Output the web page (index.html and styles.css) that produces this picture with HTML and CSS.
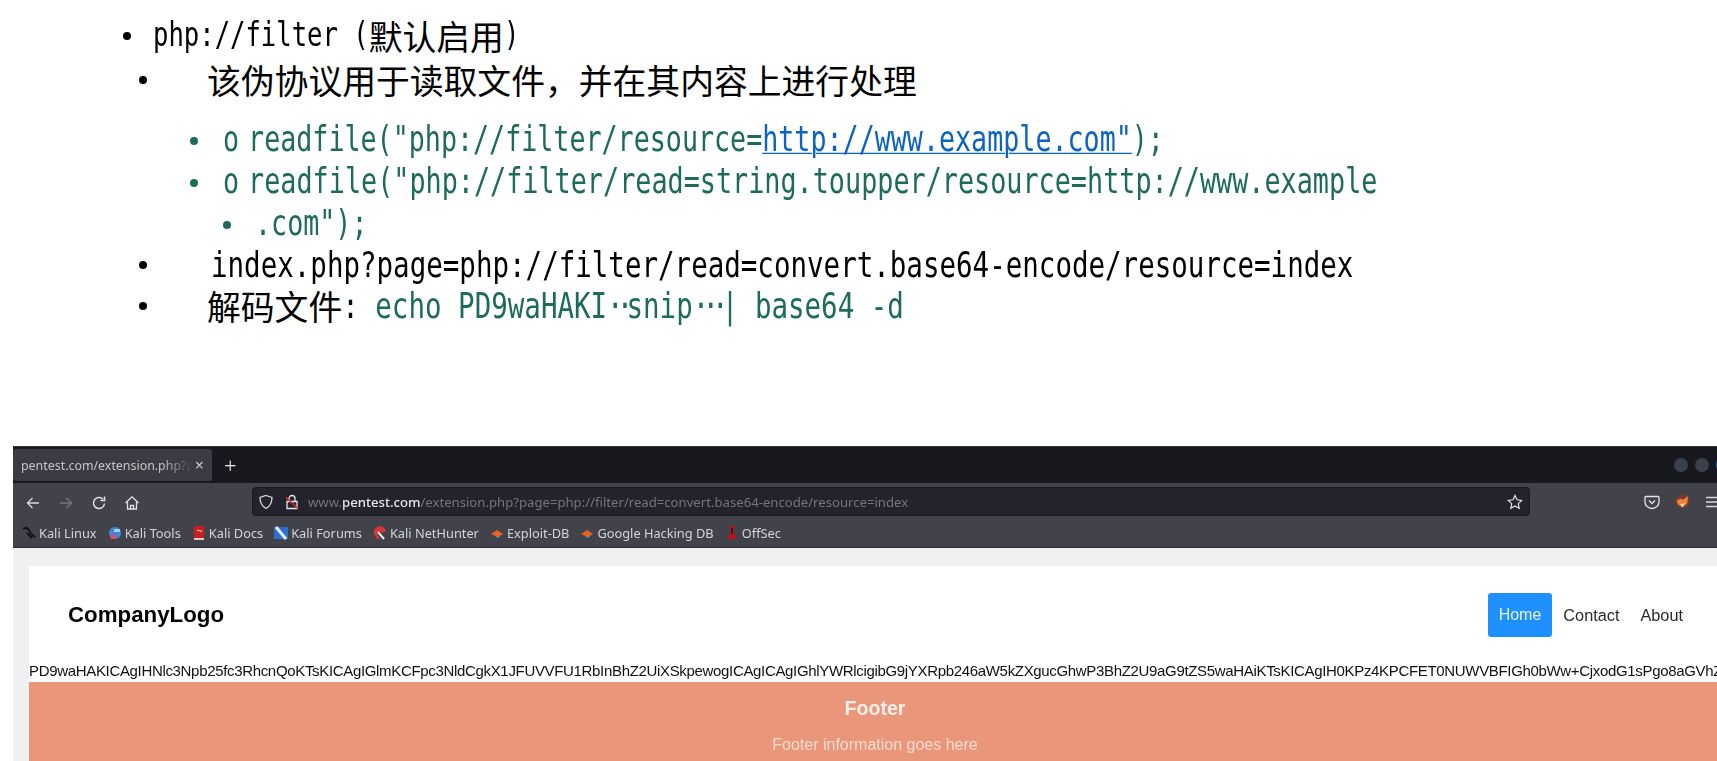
FILE: index.html
```html
<!DOCTYPE html>
<html lang="zh">
<head>
<meta charset="utf-8">
<title>php://filter</title>
<link rel="stylesheet" href="styles.css">
</head>
<body>
<section class="notes">
  <div class="row top"><span class="dot"></span><span class="lat w-a">php://filter (</span><span class="cjk">默认启用</span><span class="lat w-a">)</span></div>
  <div class="row l2 after-top"><span class="dot"></span><span class="cjk">该伪协议用于读取文件，并在其内容上进行处理</span></div>
  <div class="row l3 green after-head"><span class="dot"></span><span class="lat w-g o">o</span><span class="lat w-g">readfile("php://filter/resource=<a href="#" class="link">http://www.example.com"</a>);</span></div>
  <div class="row l3 green"><span class="dot"></span><span class="lat w-g o">o</span><span class="lat w-h">readfile("php://filter/read=string.toupper/resource=http://www.example</span></div>
  <div class="row l4 green"><span class="dot"></span><span class="lat w-g">.com");</span></div>
  <div class="row l2 up-2"><span class="dot"></span><span class="lat w-i nudge">index.php?page=php://filter/read=convert.base64-encode/resource=index</span></div>
  <div class="row l2 up-1"><span class="dot"></span><span class="cjk">解码文件</span><span class="lat w-i">: </span><span class="lat w-i greentext">echo PD9waHAKI<span class="tight-a">··</span>snip<span class="tight-b">···</span>| base64 -d</span></div>
</section>

<section class="shot">
  <div class="tabbar">
    <div class="tab"><span class="tab-title">pentest.com/extension.php?p</span><span class="tab-x">×</span></div>
    <span class="tab-plus">+</span>
    <div class="win-dots"><i></i><i></i><i class="blue"></i></div>
  </div>
  <div class="toolbar">
    <div class="navrow">
      <div class="navbtns">
        <svg viewBox="0 0 16 16" class="ic"><path d="M14 8H2.500M7.500 3 2.500 8l5 5" fill="none" stroke="#d6d6da" stroke-width="1.400"/></svg>
        <svg viewBox="0 0 16 16" class="ic"><path d="M2 8h11.500M8.500 3l5 5-5 5" fill="none" stroke="#74757c" stroke-width="1.400"/></svg>
        <svg viewBox="0 0 16 16" class="ic"><path d="M13.500 8.500A5.500 5.500 0 1 1 11.800 4M13.500 1.500V5.500H9.500" fill="none" stroke="#e2e2e6" stroke-width="1.500"/></svg>
        <svg viewBox="0 0 16 16" class="ic"><path d="M1.500 8 8 1.800 14.500 8M3.500 7v7h9V7M6.500 14v-3.500h3V14" fill="none" stroke="#e2e2e6" stroke-width="1.300"/></svg>
      </div>
      <div class="urlbar">
        <svg viewBox="0 0 16 16" class="ic shield"><path d="M8 1.500 14 3.500c0 5-1.500 8.500-6 11-4.500-2.500-6-6-6-11z" fill="none" stroke="#d8d8dc" stroke-width="1.300"/></svg>
        <svg viewBox="0 0 16 16" class="ic lock"><path d="M3 7.500h10v7H3zM5 7.500V4.500a3 3 0 0 1 6 0v3" fill="none" stroke="#e4e4e8" stroke-width="1.300"/><path d="M2 3.500 14 14.500" stroke="#e0283c" stroke-width="1.600"/></svg>
        <span class="url">www.<b>pentest.com</b>/extension.php?page=php://filter/read=convert.base64-encode/resource=index</span>
        <svg viewBox="0 0 16 16" class="ic star"><path d="M8 1.500l2 4.300 4.700.6-3.400 3.200.9 4.700L8 12l-4.200 2.300.9-4.700L1.300 6.400 6 5.800z" fill="none" stroke="#e2e2e6" stroke-width="1.200"/></svg>
      </div>
      <div class="tools">
        <svg viewBox="0 0 16 16" class="ic"><path d="M2 2.500h12a1 1 0 0 1 1 1V8a7 6.500 0 0 1-14 0V3.500a1 1 0 0 1 1-1z" fill="none" stroke="#e2e2e6" stroke-width="1.300"/><path d="M5 6.500l3 3 3-3" fill="none" stroke="#e2e2e6" stroke-width="1.400"/></svg>
        <svg viewBox="0 0 16 16" class="ic fox"><circle cx="8" cy="8" r="7.500" fill="#7a3a30"/><path d="M2 7l4-2 2 1 2-1 4-3-1 8-5 4-5-3z" fill="#ee8433"/><path d="M5 10l3 1 3-2-3 5z" fill="#f6e2d0"/></svg>
        <svg viewBox="0 0 16 16" class="ic"><path d="M1 3.500h14M1 8h14M1 12.500h14" stroke="#d6d6da" stroke-width="1.400"/></svg>
      </div>
    </div>
    <div class="bookmarks">
      <span class="bm"><svg viewBox="0 0 14 14"><path d="M1 3c3-2 6 0 7 3s3 3 5 5M4 1l3 3M5 7l5 5" fill="none" stroke="#111" stroke-width="1.800"/></svg>Kali Linux</span>
      <span class="bm"><svg viewBox="0 0 14 14"><circle cx="7" cy="7" r="6" fill="#3f86d8"/><path d="M2 9h6v4H3z" fill="#d8506a"/><path d="M6 3h6v3H6z" fill="#a8cdf2"/></svg>Kali Tools</span>
      <span class="bm"><svg viewBox="0 0 14 14"><path d="M2 0h10v12H2z" fill="#c81e24"/><path d="M2 12h10v2H2z" fill="#e8c8c0"/><path d="M5 5c2-2 3 1 5 0" stroke="#fff" fill="none"/></svg>Kali Docs</span>
      <span class="bm"><svg viewBox="0 0 14 14"><path d="M0 1h14v12H0z" fill="#2b6fd0"/><path d="M2 1l10 12" stroke="#e8eef8" stroke-width="3"/></svg>Kali Forums</span>
      <span class="bm"><svg viewBox="0 0 14 14"><path d="M1 8a6 6 0 0 1 12-3l-4 2a2 2 0 0 0-4 2l2 4H4z" fill="#d8343c"/><path d="M5 6l6 7" stroke="#eee" stroke-width="2"/></svg>Kali NetHunter</span>
      <span class="bm"><svg viewBox="0 0 14 14"><path d="M1 8l6-4 6 4-5 3z" fill="#e8641e"/><path d="M5 10h5l-2 2z" fill="#7a8aa0"/></svg>Exploit-DB</span>
      <span class="bm"><svg viewBox="0 0 14 14"><path d="M1 8l6-4 6 4-5 3z" fill="#e8641e"/><path d="M5 10h5l-2 2z" fill="#7a8aa0"/></svg>Google Hacking DB</span>
      <span class="bm"><svg viewBox="0 0 14 14"><path d="M5 0h4v9h2v4H3V9h2z" fill="#b8141c"/><path d="M6 2h2v6H6z" fill="#2a2226"/></svg>OffSec</span>
    </div>
  </div>
  <div class="viewport">
    <div class="card">
      <header class="site-head">
        <div class="logo">CompanyLogo</div>
        <nav class="site-nav"><a class="active" href="#">Home</a><a href="#">Contact</a><a href="#">About</a></nav>
      </header>
      <div class="b64">PD9waHAKICAgIHNlc3Npb25fc3RhcnQoKTsKICAgIGlmKCFpc3NldCgkX1JFUVVFU1RbInBhZ2UiXSkpewogICAgICAgIGhlYWRlcigibG9jYXRpb246aW5kZXgucGhwP3BhZ2U9aG9tZS5waHAiKTsKICAgIH0KPz4KPCFET0NUWVBFIGh0bWw+CjxodG1sPgo8aGVhZ</div>
      <footer class="site-foot">
        <h3>Footer</h3>
        <p>Footer information goes here</p>
      </footer>
    </div>
  </div>
</section>
</body>
</html>
```
FILE: styles.css
```css
* { box-sizing: border-box; }
html, body { margin: 0; padding: 0; height: 761px; overflow: hidden; background: #fff; }
body { font-family: "Liberation Sans", sans-serif; color: #000; }

.notes { height: 446px; padding-top: 15px; }
.row { display: flex; align-items: center; height: 42px; white-space: pre; position: relative; }
.dot { width: 8px; height: 8px; border-radius: 50%; background: currentColor; flex: none; }
.top { padding-left: 123px; }
.top .dot { margin-right: 22px; }
.l2 { padding-left: 139px; }
.l2 .dot { margin-right: 60px; }
.l3 { padding-left: 190px; }
.l3 .dot { margin-right: 25px; }
.l4 { padding-left: 223px; }
.l4 .dot { margin-right: 24px; }
.after-top { margin-top: 2px; }
.after-head { margin-top: 19px; }
.up-2 { margin-top: -2px; }
.up-1 { margin-top: -1px; }
.green { color: #1d6b5b; }
.greentext { color: #1d6b5b; }
.cjk { font-family: "Noto Sans CJK SC", sans-serif; font-size: 33.8px; line-height: 42px; font-weight: 400; }
.lat { display: inline-block; font-family: "DejaVu Sans Mono", monospace; line-height: 42px; transform: scaleY(1.3); transform-origin: 50% 60%; }
.w-a { font-size: 25.6px; }
.w-g { font-size: 26.7px; }
.w-h { font-size: 26.8px; }
.w-i { font-size: 27.5px; }
.nudge { margin-left: 4px; }
.o { margin-right: 9px; }
.tight-a { letter-spacing: -.25em; }
.tight-b { letter-spacing: -.25em; }
.link { color: #0b63c4; text-decoration: underline; text-decoration-thickness: 1px; }

.shot { width: 1704px; height: 315px; margin-left: 13px; overflow: hidden; filter: blur(.45px); }
.tabbar { height: 37px; background: #18191e; display: flex; align-items: center; border-top: 1px solid #33343a; font-family: "Noto Sans", sans-serif; }
.tab { width: 199px; height: 32px; flex: none; background: #3b3c43; border-radius: 3px; display: flex; align-items: center; padding: 0 8px; color: #c6c6ca; font-size: 12.4px; justify-content: space-between; }
.tab-title { width: 172px; overflow: hidden; white-space: nowrap; -webkit-mask-image: linear-gradient(90deg, #000 82%, transparent); mask-image: linear-gradient(90deg, #000 82%, transparent); }
.tab-x { font-size: 16px; }
.tab-plus { color: #e8e8ea; font-size: 22px; margin-left: 12px; font-weight: 300; }
.win-dots { margin-left: auto; display: flex; gap: 7px; margin-right: -13px; flex: none; }
.win-dots i { width: 14px; height: 14px; border-radius: 50%; background: #3a3f4c; display: block; flex: none; }
.win-dots .blue { background: #2563c8; }
.toolbar { background: #42434a; height: 65px; border-bottom: 1px solid #2c2d30; }
.navrow { height: 33px; display: flex; align-items: flex-start; }
.ic { width: 16px; height: 16px; display: block; flex: none; }
.navbtns { width: 239px; flex: none; display: flex; gap: 17px; padding: 12px 0 0 12px; }
.urlbar { width: 1278px; flex: none; height: 29px; margin-top: 4px; background: #22232c; border: 1px solid #191a1f; border-radius: 4px; display: flex; align-items: center; padding: 0 6px 0 5px; }
.lock { margin-left: 10px; }
.url { margin-left: 8px; padding-top: 1px; font-family: "Noto Sans", sans-serif; font-size: 13.15px; color: #74757c; white-space: nowrap; flex: 1; }
.url b { color: #e6e6ea; font-weight: 500; }
.tools { display: flex; flex: none; gap: 15px; padding: 11px 0 0 114px; }
.fox { width: 15px; height: 15px; }
.bookmarks { height: 31px; display: flex; align-items: center; gap: 11px; padding: 3px 0 0 9px; font-family: "Noto Sans", sans-serif; font-size: 12.8px; color: #d4d4d8; white-space: nowrap; }
.bm { display: flex; align-items: center; gap: 3px; }
.bm svg { width: 14px; height: 14px; flex: none; }

.viewport { background: #f0f0f1; padding: 18px 0 0 16px; height: 213px; }
.card { width: 1692px; background: #fff; }
.site-head { height: 94px; padding: 27px 27px 0 39px; display: flex; justify-content: space-between; align-items: flex-start; }
.logo { font-size: 22.3px; font-weight: 700; line-height: 44px; color: #000; }
.site-nav { display: flex; }
.site-nav a { height: 44px; line-height: 44px; padding: 0 11px; font-size: 16.3px; color: #2b2b2b; text-decoration: none; border-radius: 3px; }
.site-nav a:nth-child(2) { padding-right: 10px; }
.site-nav .active { background: #1e90ff; color: #e8f2ff; font-size: 16px; }
.b64 { height: 22px; line-height: 22px; font-size: 15px; letter-spacing: -.33px; white-space: nowrap; overflow: hidden; color: #111; }
.site-foot { background: #e9967a; height: 79px; text-align: center; color: #fff; padding-top: 14px; }
.site-foot h3 { margin: 0; font-size: 19.6px; line-height: 24px; font-weight: 700; color: #fbeee8; }
.site-foot p { margin: 15px 0 0; font-size: 16px; line-height: 20px; color: #f7dcd0; }
```
